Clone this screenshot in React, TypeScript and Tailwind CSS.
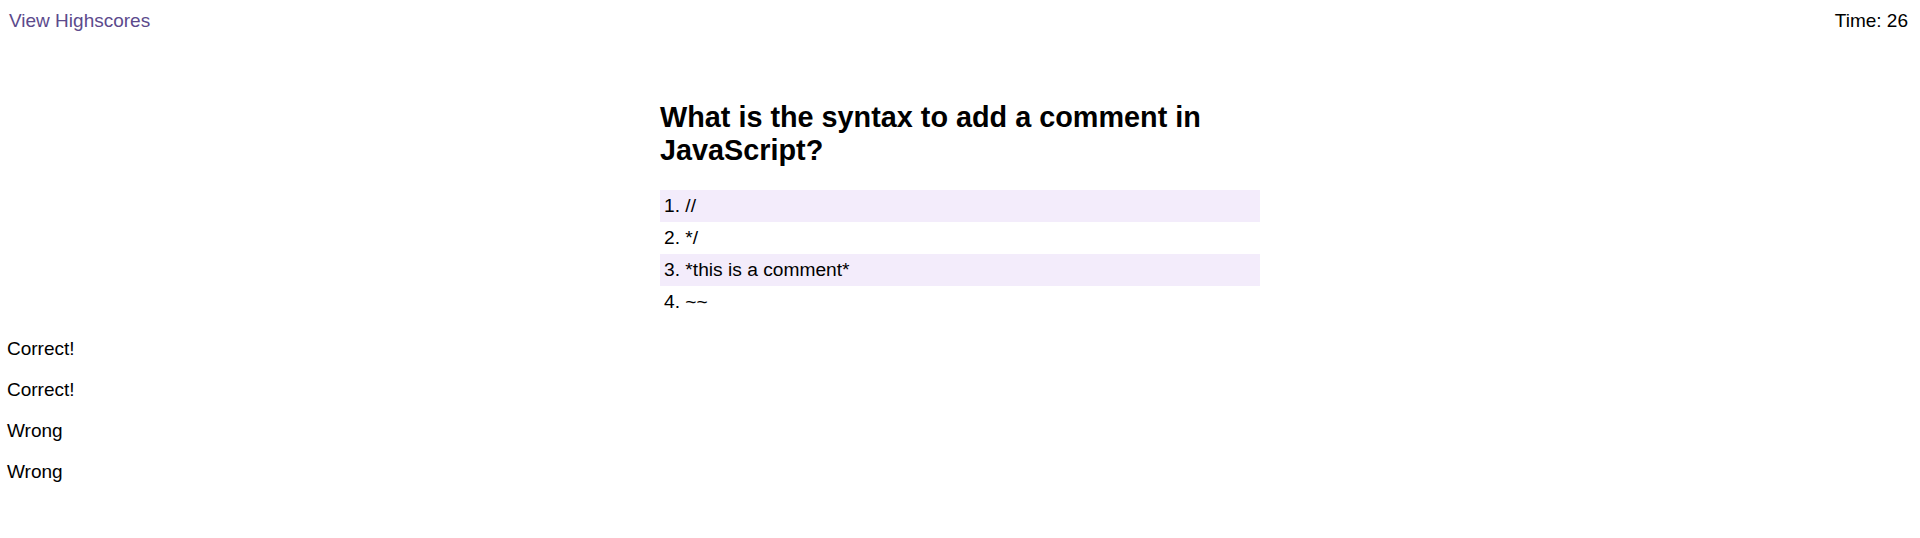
import React from "react";

const options = ["1. //", "2. */", "3. *this is a comment*", "4. ~~"];
const results = ["Correct!", "Correct!", "Wrong", "Wrong"];

export default function App() {
  return (
    <div
      className="min-h-screen bg-white text-black"
      style={{ fontFamily: '"Liberation Sans", Arial, sans-serif' }}
    >
      <header className="flex h-[42px] items-center justify-between pl-[9px] pr-[12px] text-[19px] leading-[22px]">
        <a className="cursor-pointer text-[#5c4a8c]">View Highscores</a>
        <span>Time: 26</span>
      </header>
      <main className="mx-auto mt-[59px] w-[600px]">
        <h2 className="text-[28.8px] font-bold leading-[33px]">
          What is the syntax to add a comment in JavaScript?
        </h2>
        <ul className="mt-[23px] flex flex-col">
          {options.map((o, i) => (
            <li
              key={o}
              className={
                i % 2 === 0
                  ? "flex h-[32px] items-center bg-[#f3ecfb] pl-[4px] text-[19.2px]"
                  : "flex h-[32px] items-center pl-[4px] text-[19.2px]"
              }
            >
              {o}
            </li>
          ))}
        </ul>
      </main>
      <div className="mt-[20px] flex flex-col gap-[20px] pl-[7px] text-[19px] leading-[21px]">
        {results.map((r, i) => (
          <p key={i}>{r}</p>
        ))}
      </div>
    </div>
  );
}
